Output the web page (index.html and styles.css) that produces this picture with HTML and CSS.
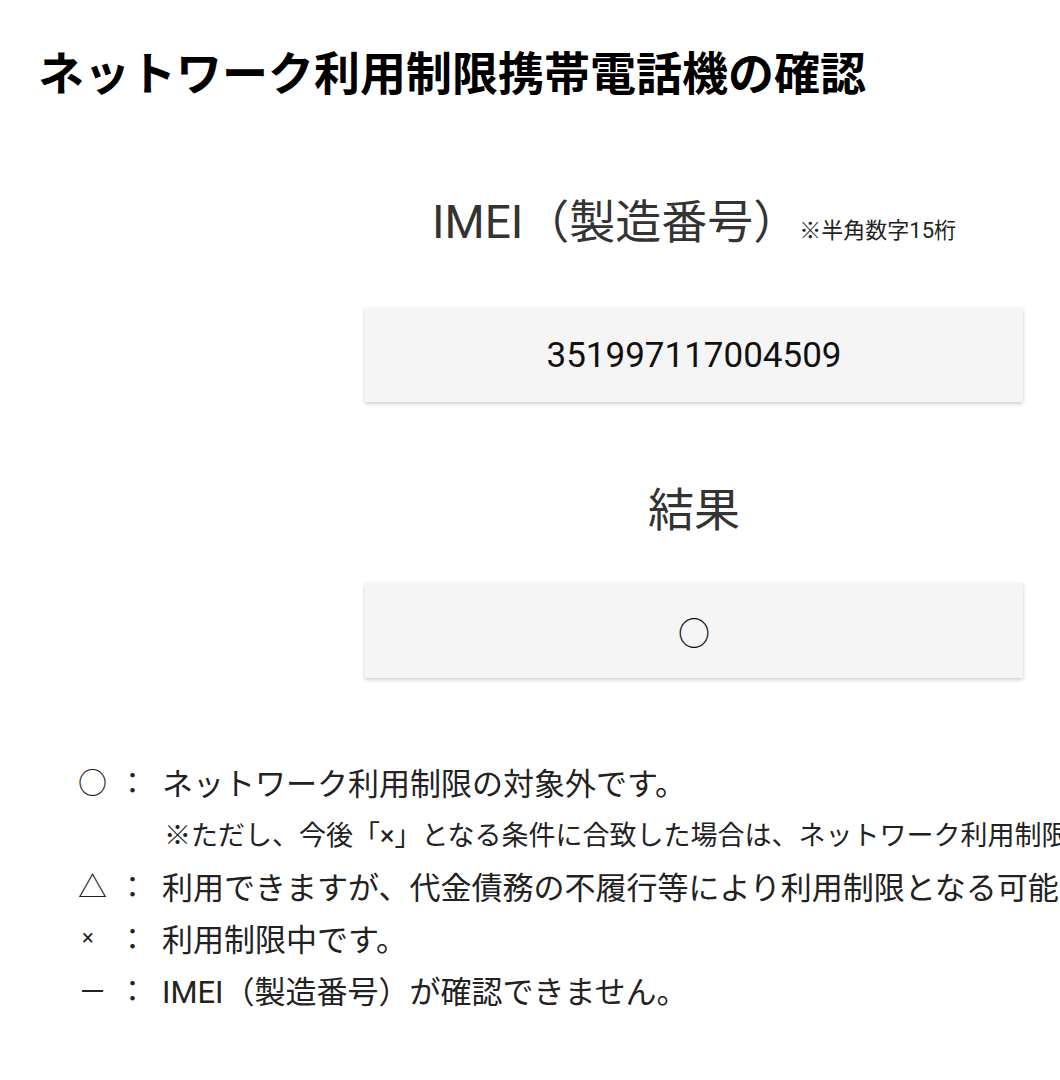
FILE: index.html
```html
<!DOCTYPE html>
<html lang="ja">
<head>
<meta charset="utf-8">
<title>ネットワーク利用制限携帯電話機の確認</title>
<link rel="stylesheet" href="styles.css">
</head>
<body>
<h1 class="title">ネットワーク利用制限携帯電話機の確認</h1>
<main class="panel">
  <h2 class="heading heading-imei">IMEI（製造番号）<span class="note">※半角数字15桁</span></h2>
  <div class="box box-imei">351997117004509</div>
  <h2 class="heading heading-result">結果</h2>
  <div class="box box-result">○</div>
</main>
<dl class="legend">
  <div class="row"><dt class="sym">○</dt><dd class="colon">：</dd><dd class="desc">ネットワーク利用制限の対象外です。</dd></div>
  <div class="row"><dd class="desc desc-note">※ただし、今後「×」となる条件に合致した場合は、ネットワーク利用制限</dd></div>
  <div class="row"><dt class="sym">△</dt><dd class="colon">：</dd><dd class="desc">利用できますが、代金債務の不履行等により利用制限となる可能</dd></div>
  <div class="row"><dt class="sym sym-x">×</dt><dd class="colon">：</dd><dd class="desc">利用制限中です。</dd></div>
  <div class="row"><dt class="sym">－</dt><dd class="colon">：</dd><dd class="desc">IMEI（製造番号）が確認できません。</dd></div>
</dl>
</body>
</html>
```
FILE: styles.css
```css
html, body {
  margin: 0;
  padding: 0;
  background: #ffffff;
  overflow: hidden;
}
body {
  width: 1060px;
  height: 1080px;
  font-family: Roboto, "Noto Sans CJK JP", sans-serif;
  color: #222;
}
.title {
  margin: 42px 0 0 0;
  padding-left: 38px;
  font-size: 46px;
  line-height: 56px;
  font-weight: 700;
  color: #000;
  white-space: nowrap;
  font-family: "Noto Sans CJK JP", sans-serif;
}
.panel {
  margin-left: 365px;
  width: 658px;
  display: flex;
  flex-direction: column;
  align-items: stretch;
  text-align: center;
}
.heading {
  margin: 0;
  font-weight: 400;
  font-size: 46px;
  line-height: 56px;
  color: #333;
  white-space: nowrap;
}
.heading-imei {
  margin-top: 96px;
}
.note {
  font-size: 22px;
  margin-left: 0;
  color: #222;
}
.heading-result {
  margin-top: 80px;
}
.box {
  background: #f5f5f5;
  box-shadow: 0 2px 4px rgba(0,0,0,0.18), 0 0 2px rgba(0,0,0,0.06);
  display: flex;
  align-items: center;
  justify-content: center;
  color: #111;
}
.box-imei {
  margin-top: 49px;
  height: 94px;
  font-size: 35px;
}
.box-result {
  margin-top: 45px;
  height: 95px;
  font-size: 32px;
  font-family: "Noto Sans CJK JP", sans-serif;
}
.legend {
  margin: 77px 0 0 78px;
  padding: 0;
}
.row {
  display: grid;
  grid-template-columns: 40px 44px auto;
  height: 52px;
  align-items: center;
  font-size: 31px;
  white-space: nowrap;
  color: #222;
}
.sym, .colon, .desc {
  margin: 0;
}
.sym {
  grid-column: 1;
  font-size: 29px;
}
.sym-x {
  font-size: 22px;
  padding-left: 4px;
}
.colon {
  grid-column: 2;
  font-size: 29px;
}
.desc {
  grid-column: 3;
}
.desc-note {
  font-size: 27px;
  padding-left: 2px;
}
```
